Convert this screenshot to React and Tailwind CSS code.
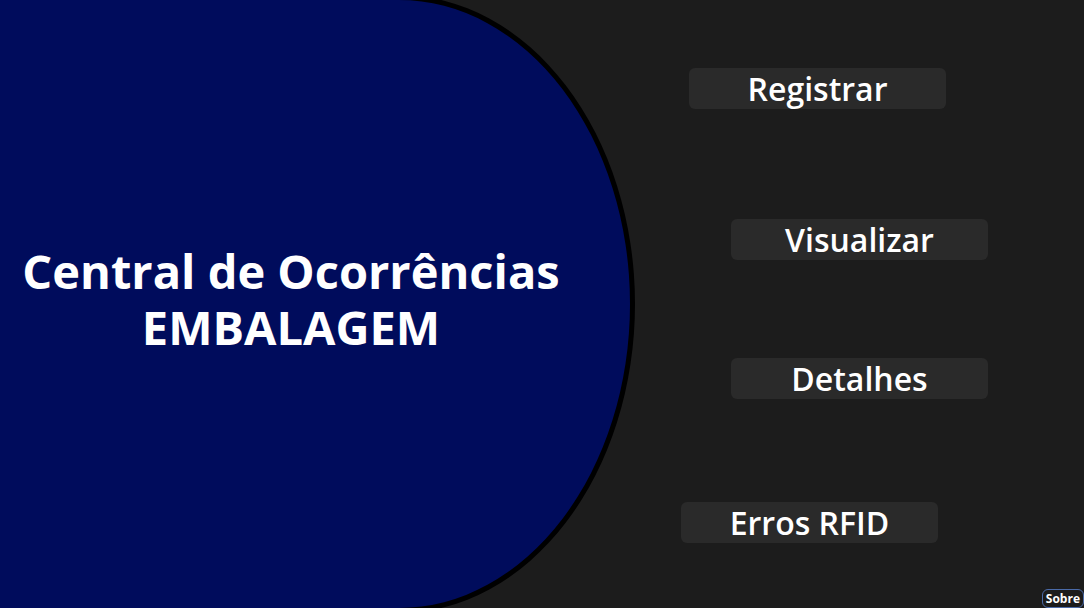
const menu = [
  { label: 'Registrar', cls: 'ml-[54px]' },
  { label: 'Visualizar', cls: 'ml-[96px] mt-[110px]' },
  { label: 'Detalhes', cls: 'ml-[96px] mt-[98px]' },
  { label: 'Erros RFID', cls: 'ml-[46px] mt-[103px]' },
]

function App() {
  return (
    <div
      className="relative flex h-[608px] w-full overflow-hidden bg-[#1c1c1c] text-white"
      style={{ fontFamily: '"Open Sans", "Noto Sans", sans-serif' }}
    >
      <div className="-ml-[5px] -mt-[5px] flex h-[618px] w-[640px] shrink-0 items-center justify-center rounded-tr-[236px_309px] rounded-br-[236px_309px] border-[5px] border-black bg-[#000c5c] pr-[48px] pb-[10px]">
        <h1 className="text-center text-[47px] font-bold leading-[56px]">
          <span className="block">Central de Ocorrências</span>
          <span className="block">EMBALAGEM</span>
        </h1>
      </div>

      <div className="flex flex-1 flex-col items-start pt-[68px]">
        {menu.map((item) => (
          <button
            key={item.label}
            className={`flex h-[41px] w-[257px] items-center justify-center rounded-md bg-[#2a2a2a] text-[32px] font-semibold text-white ${item.cls}`}
          >
            {item.label}
          </button>
        ))}
      </div>

      <button className="absolute bottom-0 right-0 rounded-md border border-[#4a6aa8] bg-[#1c1c1c] px-[3px] text-[12px] font-bold leading-[17px] text-white">
        Sobre
      </button>
    </div>
  )
}

export default App
